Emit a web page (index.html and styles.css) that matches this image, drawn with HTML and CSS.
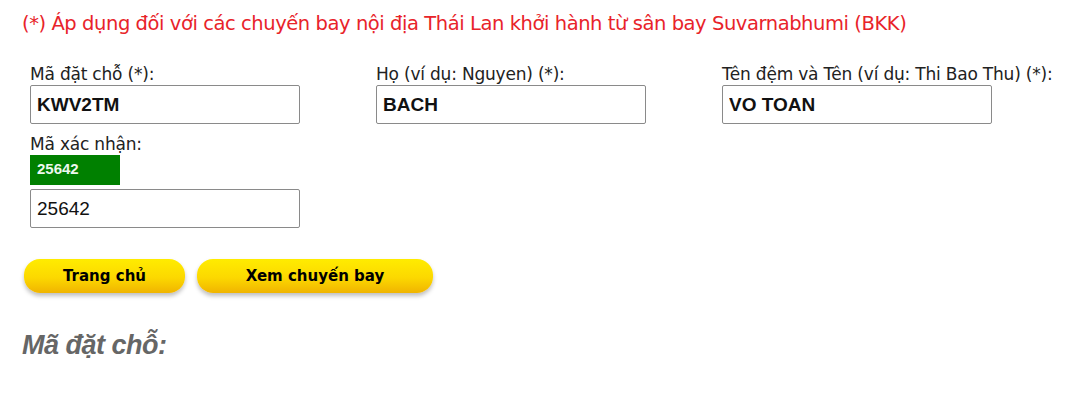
FILE: index.html
```html
<!DOCTYPE html>
<html lang="vi">
<head>
    <meta charset="UTF-8">
    <title>Tra cứu đặt chỗ</title>
    <link rel="stylesheet" href="styles.css">
</head>
<body>

    <p class="ghichu">(*) Áp dụng đối với các chuyến bay nội địa Thái Lan khởi hành từ sân bay Suvarnabhumi (BKK)</p>

    <form class="tracuu">
        <div class="hang">
            <div class="o">
                <label for="madatcho">Mã đặt chỗ (*):</label>
                <input type="text" id="madatcho" class="dam" value="KWV2TM">
            </div>
            <div class="o">
                <label for="ho">Họ (ví dụ: Nguyen) (*):</label>
                <input type="text" id="ho" class="dam" value="BACH">
            </div>
            <div class="o">
                <label for="ten">Tên đệm và Tên (ví dụ: Thi Bao Thu) (*):</label>
                <input type="text" id="ten" class="dam" value="VO TOAN">
            </div>
        </div>

        <div class="o">
            <label for="xacnhan">Mã xác nhận:</label>
            <div class="captcha">25642</div>
            <input type="text" id="xacnhan" value="25642">
        </div>

        <div class="nut">
            <button type="button" class="vang ngan">Trang chủ</button>
            <button type="button" class="vang dai">Xem chuyến bay</button>
        </div>
    </form>

    <h2 class="tieude">Mã đặt chỗ:</h2>

</body>
</html>
```

FILE: styles.css
```css
body {
    margin: 0;
    padding: 0 22px;
    font-family: Tahoma, "DejaVu Sans", sans-serif;
    color: #222;
    background: #fff;
}

.ghichu {
    margin: 12px 0 0 0;
    font-size: 19.5px;
    color: #e8232a;
    letter-spacing: -0.43px;
}

.tracuu {
    margin-top: 29px;
    padding-left: 8px;
}

.hang {
    display: flex;
    gap: 76px;
}

.o {
    width: 270px;
}

.o:last-child {
    width: auto;
}

label {
    display: block;
    font-size: 17px;
    color: #222;
    line-height: 21px;
    white-space: nowrap;
    letter-spacing: -0.2px;
}

input[type="text"] {
    display: block;
    width: 270px;
    height: 39px;
    box-sizing: border-box;
    border: 1px solid #8a8a8a;
    border-radius: 2px;
    padding: 0 6px;
    font-family: "Liberation Sans", Arial, sans-serif;
    font-size: 19px;
    color: #111;
}

input.dam {
    font-weight: bold;
}

.captcha {
    width: 90px;
    height: 30px;
    margin-bottom: 4px;
    background: #008000;
    color: #eef8ee;
    font-family: "Liberation Sans", Arial, sans-serif;
    font-weight: bold;
    font-size: 15px;
    line-height: 28px;
    padding-left: 7px;
    box-sizing: border-box;
}

.hang + .o {
    margin-top: 10px;
}

.nut {
    display: flex;
    gap: 12px;
    margin: 31px 0 0 -6px;
}

.vang {
    height: 34px;
    border: none;
    border-radius: 16px;
    background: linear-gradient(#ffec00, #fcd800 55%, #f0b400);
    box-shadow: 0 3px 4px rgba(0, 0, 0, 0.25);
    font-family: Tahoma, "DejaVu Sans", sans-serif;
    font-weight: bold;
    font-size: 15px;
    color: #000;
    cursor: pointer;
}

.ngan {
    width: 161px;
}

.dai {
    width: 236px;
}

.tieude {
    margin: 37px 0 0 0;
    font-family: "Liberation Sans", Arial, sans-serif;
    font-style: italic;
    font-weight: bold;
    font-size: 27px;
    color: #666;
    letter-spacing: -0.5px;
}
```
